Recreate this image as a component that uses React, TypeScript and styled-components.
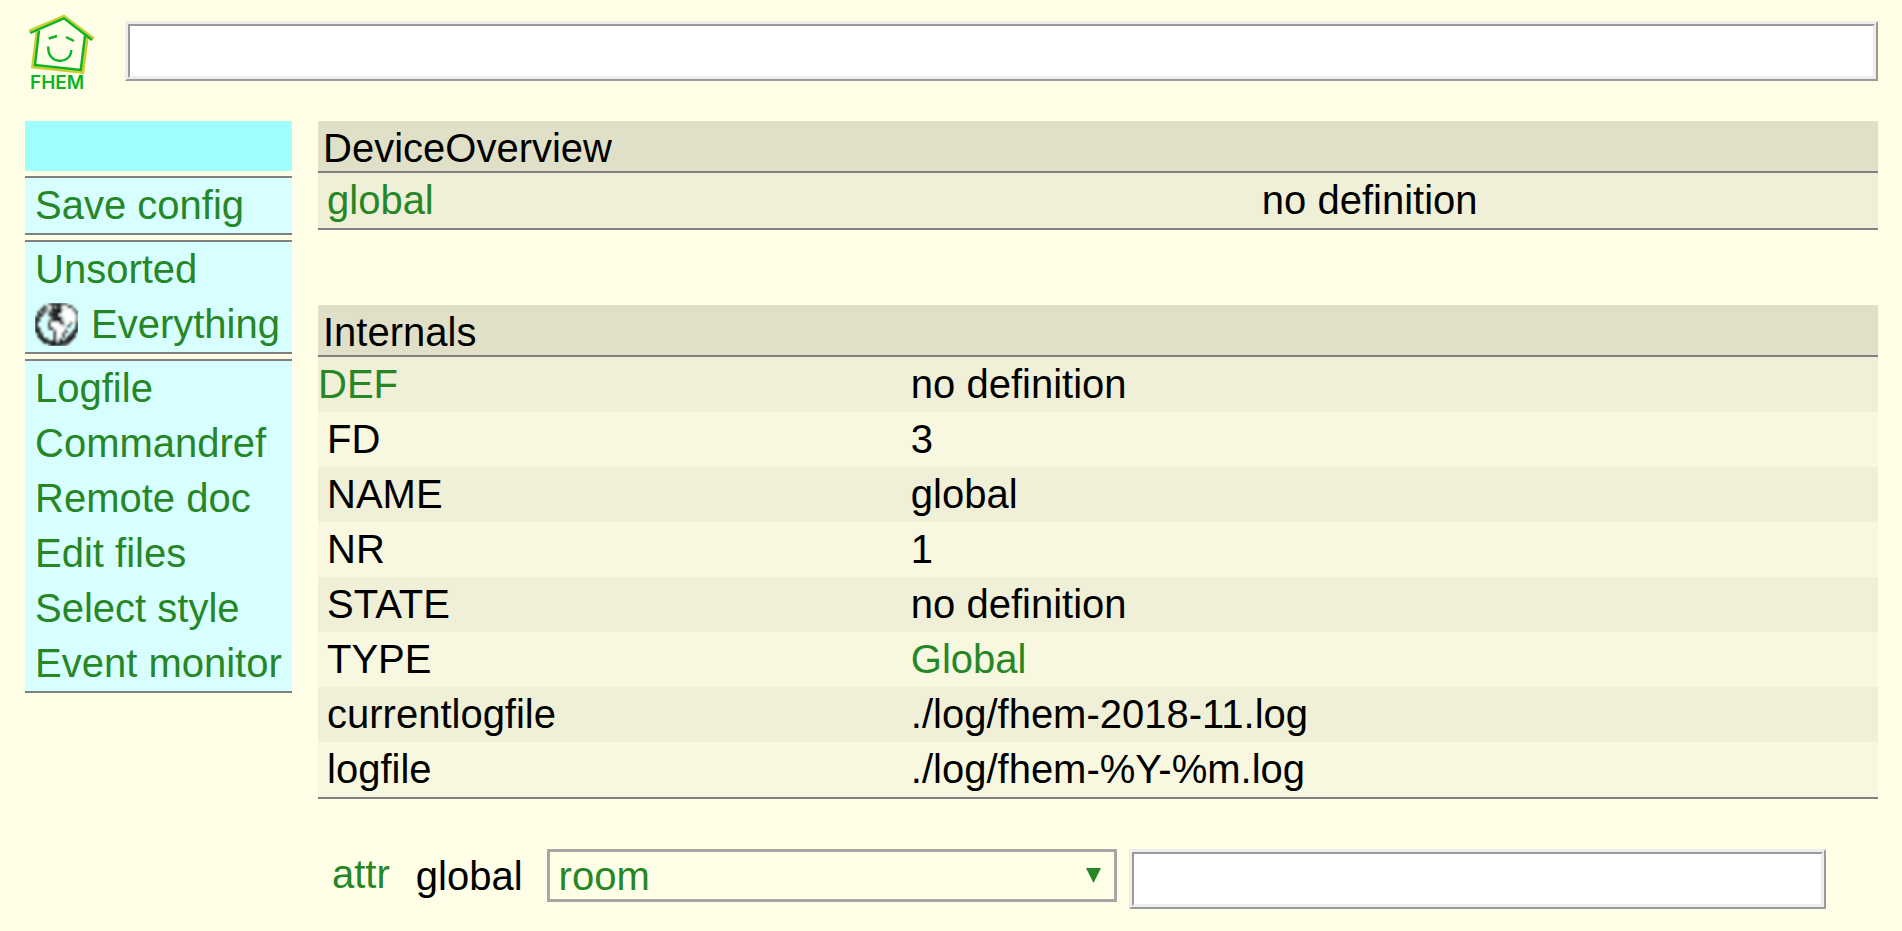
import React from "react";
import styled, { createGlobalStyle } from "styled-components";

const GlobalStyle = createGlobalStyle`
  body {
    margin: 0;
    background: #ffffe7;
    color: #000;
    font: 40px/45px Arial, "Liberation Sans", sans-serif;
  }
  *, *::before, *::after { box-sizing: border-box; }
`;

const Page = styled.div`
  padding: 12px 24px 22px 25px;
`;

const Header = styled.header`
  display: flex;
  align-items: flex-start;
  gap: 25px;
  height: 109px;
`;

const LogoLink = styled.a`
  flex: none;
  width: 75px;
  height: 90px;
`;

const TextBox = styled.input`
  flex: 1;
  min-width: 0;
  height: 60px;
  margin: 0;
  padding: 0 4px;
  border: 5px ridge #eee;
  border-radius: 0;
  background: #fff;
  font: inherit;
  outline: none;
`;

const CommandForm = styled.form`
  flex: 1;
  display: flex;
  padding-top: 9px;
`;

const Columns = styled.div`
  display: flex;
  align-items: flex-start;
  gap: 26px;
`;

const Sidebar = styled.nav`
  flex: none;
  display: flex;
  flex-direction: column;
  gap: 5px;
  width: 267px;
`;

const Banner = styled.div`
  height: 50px;
  background: #a0ffff;
`;

const MenuGroup = styled.ul`
  margin: 0;
  padding: 0;
  list-style: none;
  background: #d7ffff;
  border-top: 2px solid #808080;
  border-bottom: 2px solid #808080;
`;

const Link = styled.a`
  color: #278727;
  text-decoration: none;
`;

const MenuLink = styled(Link)`
  display: flex;
  align-items: center;
  gap: 13px;
  height: 55px;
  padding: 0 10px;
  white-space: nowrap;
`;

const Main = styled.main`
  flex: 1;
  min-width: 0;
`;

const DataTable = styled.table<{ $split: number }>`
  width: 100%;
  margin-bottom: 75px;
  table-layout: fixed;
  border-collapse: separate;
  border-spacing: 0;
  border-bottom: 2px solid #808080;

  col:first-child { width: ${(p) => p.$split}%; }
`;

const Caption = styled.caption`
  height: 52px;
  padding: 5px 5px 0;
  text-align: left;
  background: #e0e0c8;
  border-bottom: 2px solid #808080;
`;

const Row = styled.tr`
  background: #f0f0d8;
  &:nth-child(even) { background: #f8f8e0; }
`;

const NameCell = styled.th<{ $flush?: boolean }>`
  height: 55px;
  padding: 0 0 0 ${(p) => (p.$flush ? 0 : 9)}px;
  font-weight: normal;
  text-align: left;
`;

const ValueCell = styled.td`
  padding: 0;
`;

const AttrForm = styled.form`
  display: flex;
  align-items: flex-start;
  padding: 0 52px 0 14px;
  margin-top: -25px;
`;

const AttrButton = styled.button`
  margin: 0 26px 0 0;
  padding: 3px 0 0;
  border: 0;
  background: none;
  color: #278727;
  font: inherit;
  line-height: 45px;
`;

const AttrLabel = styled.label`
  margin-right: 24px;
  padding-top: 5px;
`;

const SelectWrap = styled.div`
  position: relative;
  flex: 0 1 570px;
  margin-right: 12px;
`;

const Select = styled.select`
  display: block;
  appearance: none;
  width: 100%;
  height: 53px;
  margin: 0;
  padding: 1px 40px 0 9px;
  border: 3px solid #a6a6a6;
  border-radius: 0;
  background: transparent;
  color: #278727;
  font: inherit;
`;

const Arrow = styled.svg`
  position: absolute;
  top: 19px;
  right: 16px;
  pointer-events: none;
`;

const LogoDrawing = styled.svg`
  display: block;
`;

const FhemLogo = () => (
  <LogoDrawing width="75" height="90" viewBox="0 0 75 90" fill="none" aria-label="FHEM" role="img">
    <g stroke="#cccc33" strokeWidth="3.6">
      <path d="M4.300 19.300 L38.800 4.500 L68.500 27" />
      <path d="M12.300 19.500 L8 54.600 L57.600 60 L62 25" />
    </g>
    <g stroke="#0ab428" strokeWidth="2.400">
      <path d="M5.300 21 L39 6.300 L67 28" />
      <path d="M14 18.500 L10 53 L55.700 58 L60 23.500" />
      <path d="M23.700 26.500 L32 24" />
      <path d="M41 25 L49 29" />
      <path d="M23.300 34.500 C22 53 46 53 46.300 38" />
    </g>
    <text x="5" y="77" fill="#0ab428" fontFamily="Inter, sans-serif" fontWeight="600" fontSize="19">FHEM</text>
  </LogoDrawing>
);

const globeRows = [
  ".....dkkkkdd....",
  "...kgwdgkdwwkk..",
  "..kdglkkkklwwwk.",
  ".kgdlddkkkwwwwlk",
  ".kk..dkkkwwwwwwg",
  "kd....dkkklwwwwg",
  "kd...gdkkklwwwwg",
  "k....kwwwdkwwdwk",
  "k....kwwwwl.k..k",
  "kd...dkwwwwl...k",
  "kk.....kwwwk..kk",
  ".kd....kwwk..dk.",
  ".kk....kwwd.dkk.",
  "..kkd..kwk.dkk..",
  "...kkkkkgkkkk...",
  ".....dkkkkdd....",
];

const globeShades: Record<string, string> = {
  k: "#0c0c0c",
  d: "#484848",
  g: "#8c8c8c",
  l: "#d0d0d0",
  w: "#fff",
};

const GlobeIcon = () => (
  <svg width="43" height="43" viewBox="0 0 16 16" aria-hidden="true">
    <filter id="soften">
      <feGaussianBlur stdDeviation="0.3" />
    </filter>
    <g filter="url(#soften)">
      {globeRows.flatMap((row, y) =>
        [...row].map((shade, x) =>
          shade === "." ? null : (
            <rect key={`${x}-${y}`} x={x} y={y} width="1.05" height="1.05" fill={globeShades[shade]} />
          )
        )
      )}
    </g>
  </svg>
);

const menu = [
  ["Save config"],
  ["Unsorted", "Everything"],
  ["Logfile", "Commandref", "Remote doc", "Edit files", "Select style", "Event monitor"],
];

const internals: [string, string][] = [
  ["DEF", "no definition"],
  ["FD", "3"],
  ["NAME", "global"],
  ["NR", "1"],
  ["STATE", "no definition"],
  ["TYPE", "Global"],
  ["currentlogfile", "./log/fhem-2018-11.log"],
  ["logfile", "./log/fhem-%Y-%m.log"],
];

export default function App() {
  return (
    <Page>
      <GlobalStyle />
      <Header>
        <LogoLink href="#"><FhemLogo /></LogoLink>
        <CommandForm>
          <TextBox type="text" aria-label="Command" />
        </CommandForm>
      </Header>
      <Columns>
        <Sidebar>
          <Banner />
          {menu.map((group) => (
            <MenuGroup key={group[0]}>
              {group.map((item) => (
                <li key={item}>
                  <MenuLink href="#">
                    {item === "Everything" && <GlobeIcon />}
                    {item}
                  </MenuLink>
                </li>
              ))}
            </MenuGroup>
          ))}
        </Sidebar>
        <Main>
          <DataTable $split={60.5}>
            <Caption>DeviceOverview</Caption>
            <colgroup><col /><col /></colgroup>
            <tbody>
              <Row>
                <NameCell scope="row"><Link href="#">global</Link></NameCell>
                <ValueCell>no definition</ValueCell>
              </Row>
            </tbody>
          </DataTable>
          <DataTable $split={38}>
            <Caption>Internals</Caption>
            <colgroup><col /><col /></colgroup>
            <tbody>
              {internals.map(([name, value]) => (
                <Row key={name}>
                  <NameCell scope="row" $flush={name === "DEF"}>
                    {name === "DEF" ? <Link href="#">{name}</Link> : name}
                  </NameCell>
                  <ValueCell>{name === "TYPE" ? <Link href="#">{value}</Link> : value}</ValueCell>
                </Row>
              ))}
            </tbody>
          </DataTable>
          <AttrForm>
            <AttrButton type="button">attr</AttrButton>
            <AttrLabel htmlFor="attribute">global</AttrLabel>
            <SelectWrap>
              <Select id="attribute" defaultValue="room">
                <option>room</option>
              </Select>
              <Arrow width="15" height="15" viewBox="0 0 15 15"><path d="M0 0H15L7.500 15Z" fill="#278727" /></Arrow>
            </SelectWrap>
            <TextBox type="text" aria-label="Attribute value" />
          </AttrForm>
        </Main>
      </Columns>
    </Page>
  );
}
